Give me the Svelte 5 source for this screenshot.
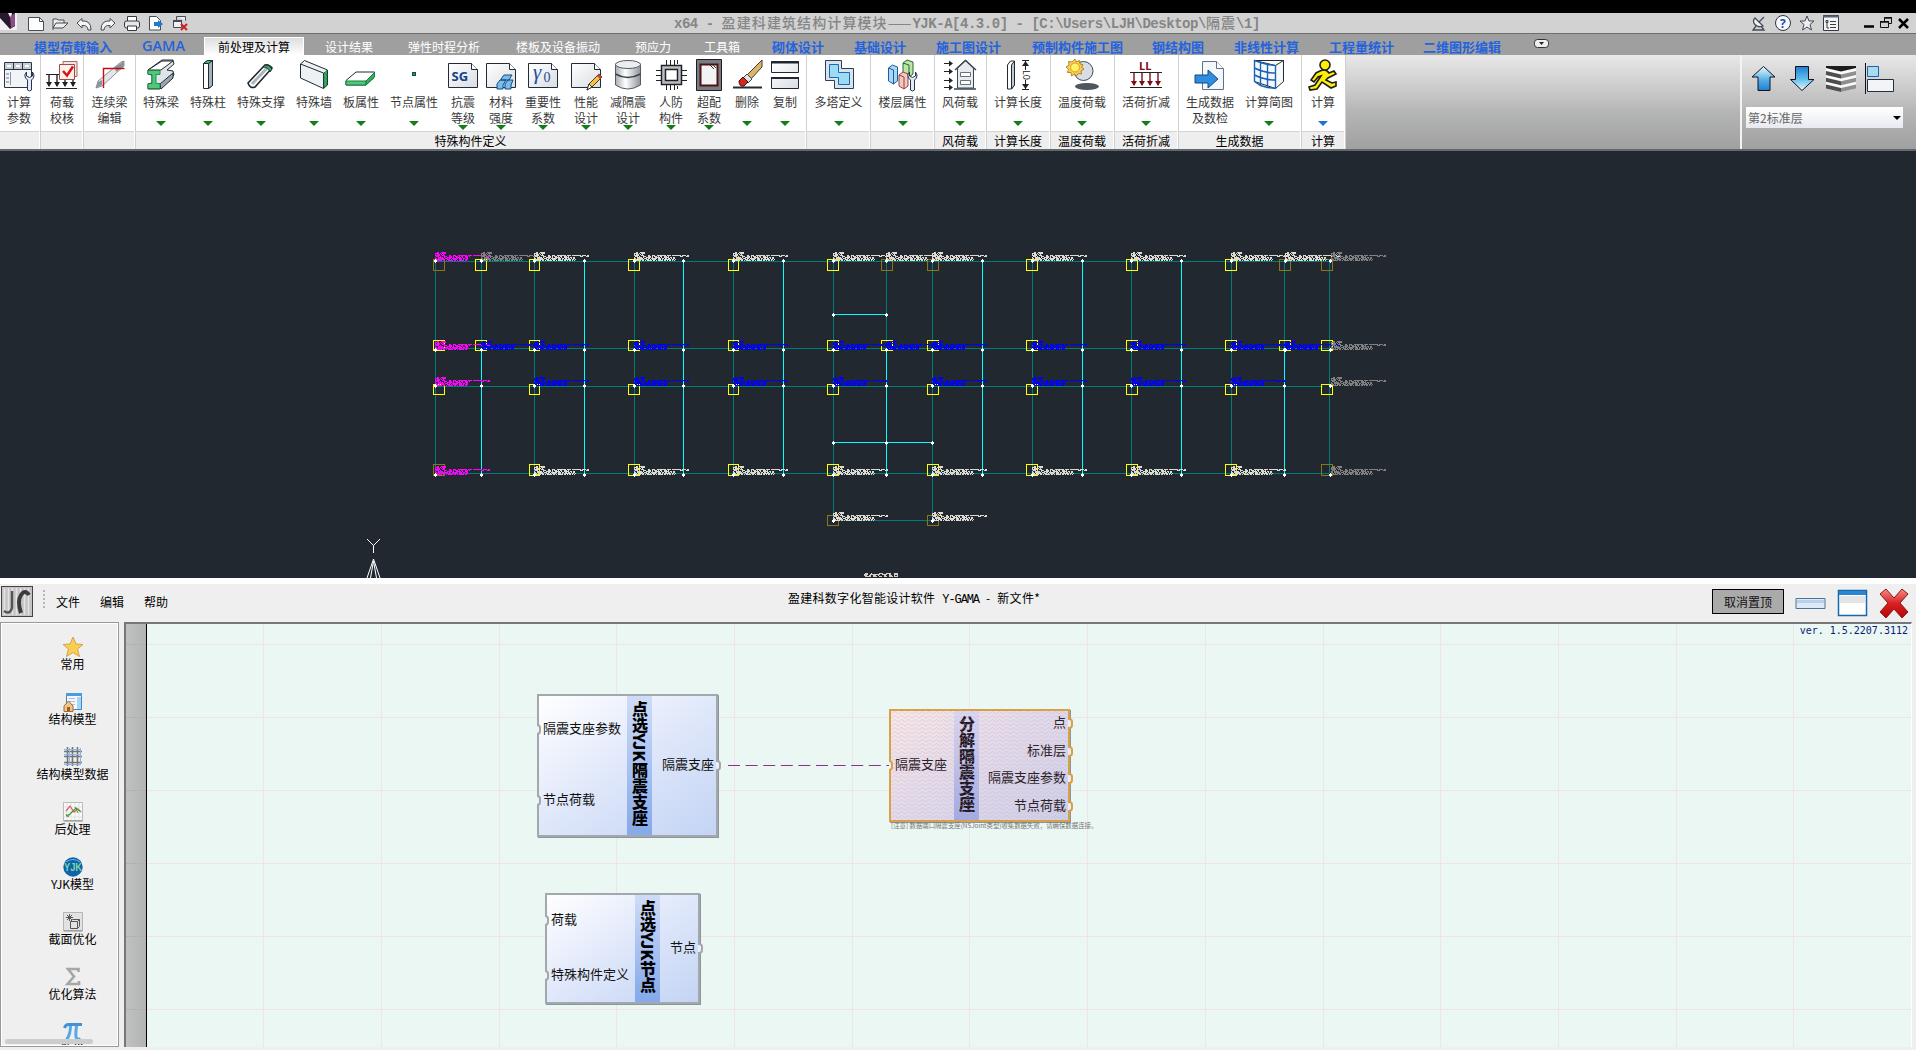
<script>
  const doc = '<path d="M1.5 4.500h23l6 6v18h-29z" fill="url(#gw)" stroke="#222b38"/><path d="M24.500 4.500v6h6" fill="#fff" stroke="#222b38"/>';
  const wrench = (x, y) => `<path transform="translate(${x} ${y})" d="M1.500 1v4l3 1.500 3-1.500v-4q2.500 3 1 6l-2 2v10q-2 2-4 0v-10l-2-2q-2-3 1-6z" fill="#e4ebf4" stroke="#26384d"/>`;
  const downs = (xs, y1, y2, c) => xs.map((x) => `<path d="M${x} ${y1}V${y2}" stroke="${c}" stroke-width="1.400"/><path d="M${x - 3} ${y2 - 4}h6l-3 5z" fill="${c}"/>`).join('');

  const icons = {
    params: `<path d="M1.500 3.500h27v25h-27z" fill="#f2f4f7" stroke="#2c3643"/><path d="M2 4h26v6H2z" fill="#c5ccd4"/><path d="M2 10.500h26M10.500 4v6M19.500 4v6" stroke="#2c3643"/><path d="M4 7h4M13 7h4M22 7h4" stroke="#fff" stroke-width="2"/><path d="M7.500 13v13" stroke="#8b95a1"/><path d="M3 15h3M3 19h3M3 23h3" stroke="#6b7683"/>${wrench(22, 12)}`,
    check: `<path d="M0 15.500h31M0 29.500h31" stroke="#222"/>${downs([3, 11, 19, 27], 16, 27, '#222')}<path d="M17 2.500h14v15h-14z" fill="#f5e3e0" stroke="#a66"/><path d="M13.500 5.500h15v15h-15z" fill="#fbf0ee" stroke="#9d4a47"/><path d="M17 12l4 4.500 6-9" fill="none" stroke="#e01010" stroke-width="2.500"/>`,
    cont: `<path d="M2 29l2-7L27 3l3-1v5L8 27z" fill="#e4e7ea" stroke="#8b929c"/><path d="M21 8l9-6v5l-8 6zM2 29l2-6 4-2v5z" fill="#8b929c"/><path d="M9.500 29V9.500h21" fill="none" stroke="#c40f16" stroke-width="1.400"/>`,
    beam: `<path d="M3 11L17 1h11l1 4-7 6 6 1 1 4-14 14H3v-5l4-1v-8l-4-1z" fill="#dfe4e7" stroke="#1f2b33"/><path d="M3 11h13L28 2H17z" fill="#fff" stroke="#1f2b33"/><path d="M15 25l13-11v5L16 30z" fill="#9da6ae" stroke="#1f2b33"/><path d="M3 11.500h12v4h-4v9h4v5H3v-5h4v-9H3z" fill="#4fc878" stroke="#137a3c" stroke-width=".8"/>`,
    column: `<path d="M11.500 4.500l4-3h5v25l-4 3h-5z" fill="#fff" stroke="#1f2b33"/><path d="M16.500 4.500v25l4-3V1.500z" fill="#a9b1b8" stroke="#1f2b33"/><path d="M11.500 4.500l4-3h5l-4 3z" fill="#36c96a" stroke="#1f2b33"/>`,
    brace: `<path d="M3 24L20 6q4-1 7 3L10 28q-5 2-7-4z" fill="#fff" stroke="#1f2b33" stroke-width="1.600"/><path d="M7 25L23 8" stroke="#aeb5bb" stroke-width="3"/><path d="M20 6q4-1 7 4l-2 3q-2-5-7-5z" fill="#2fae5c" stroke="#1f2b33"/>`,
    wall: `<path d="M2.500 5l4-3.500L29.500 11v15l-4 3.500L2.500 19z" fill="#eef1f3" stroke="#1f2b33"/><path d="M2.500 5L25.500 14v15l4-3.500V11" fill="none" stroke="#1f2b33"/><path d="M26 14l3-3v15l-3 2.500z" fill="#2fae5c" stroke="#1b6b39" stroke-dasharray="2 2"/>`,
    slab: `<path d="M1 21.500L11 13h18.500v5L21 26H1z" fill="#fff" stroke="#1f2b33"/><path d="M1 22h20v4H1z" fill="#4fc878" stroke="#178042"/><path d="M21 22l8.500-8.500v4.500L21 26z" fill="#2fae5c" stroke="#178042"/>`,
    node: '<path d="M14 13h4v4h-4z" fill="#1b4a38"/><path d="M15 14h2v2h-2z" fill="#2b8f62"/>',
    sg: `${doc}<text x="4.500" y="22" font-family="Open Sans, Noto Sans, sans-serif" font-weight="700" font-size="13" fill="#12428c">SG</text>`,
    material: `${doc}<path d="M12 25l3-4h6l-3 5v4h-6zM20 25l3-4h5l-2 5v4h-6zM16 20l3-4h8l-3 5h-8z" fill="#79bdf0" stroke="#174a7a"/>`,
    gamma: `${doc}<text x="6" y="20" font-family="Liberation Serif, serif" font-style="italic" font-size="21" fill="#1c4f9c">γ</text><text x="16.500" y="23" font-family="Liberation Serif, serif" font-size="14" fill="#1c4f9c">0</text>`,
    perf: `${doc}<path d="M17 31l2-6L29 15l3 3-10 10z" fill="#f6c443" stroke="#4d3a12"/><path d="M17 31l2-6 3 3z" fill="#fff" stroke="#333"/><path d="M27 17l2-2 3 3-2 2z" fill="#c8433a"/>`,
    isolate: '<path d="M3.500 5v21q12 8 25 0V5z" fill="url(#gc)" stroke="#555c64"/><ellipse cx="16" cy="5.500" rx="12.500" ry="4" fill="#eceef0" stroke="#555c64"/><path d="M3.500 15q12 7 25 0" fill="none" stroke="#3c434b" stroke-width="1.500"/>',
    civil: '<path d="M6.500 6.500h20v19h-20z" fill="#b9bfc7" stroke="#222" stroke-width="1.500"/><path d="M10.500 10.500h12v11h-12z" fill="#fff" stroke="#222" stroke-width="1.500"/><path d="M11.500 1v5M15.500 1v5M19.500 1v5M22.500 1v4M11.500 26v5M15.500 26v5M19.500 26v5M22.500 27v3M1 11.500h5M1 16.500h5M1 21.500h5M27 11.500h5M27 16.500h5M27 21.500h5" stroke="#222"/>',
    over: '<path d="M3.500.500h25v31h-25z" fill="#777c82" stroke="#1a1f26"/><path d="M7.500 5.500h17v21h-17z" fill="#f2f3f5" stroke="#5b0f0f" stroke-width="2"/><path d="M7.500 5.500h17v21h-17z" fill="none" stroke="#222" stroke-dasharray="2 3"/><path d="M17 6l4 4M20 6l3 3" stroke="#333"/>',
    erase: '<path d="M2 28.500h29" stroke="#222a33" stroke-width="2"/><path d="M15 17L31 1v7L19 21z" fill="#d9b56d" stroke="#4d3a20"/><path d="M12 19l4-4 5 5-4 4z" fill="#dfe3e6" stroke="#444"/><path d="M8 22l4-4 5 5-4 4q-5 1-5-5z" fill="#d8281c" stroke="#3d0d0d"/>',
    copy: '<path d="M2.500 2.500h27v11h-27zM2.500 18.500h27v11h-27z" fill="url(#gw)" stroke="#1f2733"/><path d="M2 3.500h28M2 19h28" stroke="#1f2733" stroke-width="2"/>',
    tower: '<path d="M2.500 1.500h16v8h12v20h-19v-8h-9z" fill="#dbe3ea" stroke="#28425a"/><path d="M6.500 5.500h9v8h11v12h-11v-7h-9z" fill="#9bdcf4" stroke="#1b69b0"/>',
    floors: `<path d="M16 4l4-3 6 2v12l-4 3-6-2z" fill="#bfe3a8" stroke="#27682b"/><path d="M16 4l6 2v12" fill="none" stroke="#27682b"/><path d="M1.500 9l4-3 5 2v14l-4 3-5-3z" fill="#a9d6f5" stroke="#1b5f9f"/><path d="M1.500 9l5 2v14" fill="none" stroke="#1b5f9f"/><path d="M12 16l4-3 5 2v12l-4 3-5-3z" fill="#f3c9c4" stroke="#9c4039"/><path d="M12 16l5 2v12" fill="none" stroke="#9c4039"/>${wrench(21, 12)}`,
    wind: '<path d="M0 4.500h7M0 12.500h7M0 21.500h7M0 28.500h7" stroke="#222"/><path d="M5 1.500l4 3-4 3zM5 9.500l4 3-4 3zM5 18.500l4 3-4 3zM5 25.500l4 3-4 3z" fill="#222"/><path d="M13.500 9l8-8 8 8v20h-16z" fill="#e8ecf0" stroke="#3b4651"/><path d="M11 11l10.500-9.500L32 11M10 30h22" fill="none" stroke="#3b4651" stroke-width="1.500"/><path d="M16.500 13.500h10v4h-10zM16.500 21.500h10v4h-10z" fill="#fff" stroke="#66717c"/>',
    length: '<path d="M5.500 6l3-4h4v24l-3 4h-4z" fill="#fff" stroke="#1f2b33"/><path d="M9.500 6v24l3-4V2z" fill="#c2c8cf" stroke="#1f2b33"/><path d="M20 1.500h7M20 30.500h7M23.500 2v9M23.500 21v9" stroke="#222"/><path d="M20 7l3.500-5 3.500 5zM20 25l3.500 5 3.500-5z" fill="#222"/><text transform="translate(21 11) rotate(90)" font-family="Open Sans, sans-serif" font-size="9" fill="#111">L0</text>',
    temp: '<ellipse cx="21" cy="27.500" rx="12" ry="3.500" fill="#50565e"/><circle cx="17.500" cy="12" r="9.500" fill="#d9dee4" stroke="#3c4a58"/><path d="M9 0l1.500 3 3-1.500.500 3.500 3 .500-1.500 3L18 10l-3 2 .500 3-3.500-.500L10.500 17l-2-2-3 2-.500-3.500-3.500 0 1-3L0 8l3-2L2.500 2.500 6 3z" fill="#f7cf52" stroke="#a8700e" stroke-width=".8"/><circle cx="9" cy="8.500" r="4.500" fill="#fff36b" stroke="#e39a14"/>',
    live: `<text x="9" y="11" font-family="Open Sans, Noto Sans, sans-serif" font-weight="700" font-size="11" fill="#7b0e16">LL</text><path d="M0 13.500h32M0 28.500h32" stroke="#222"/>${downs([4, 12, 20, 28], 14, 26, '#7b0e16')}`,
    gen: '<path d="M8.500 2.500h14l7 7v21h-21z" fill="#f4f7fa" stroke="#5c7390"/><path d="M22.500 2.500v7h7" fill="#fff" stroke="#5c7390"/><path d="M1 16h13v-5l10 9-10 9v-5H1z" fill="#2f8de0" stroke="#12497f"/>',
    diagram: '<path d="M1.500 1.500l21 5 8-5v21l-8 7-21-7z" fill="#f6f9fb" stroke="#1f2b33"/><path d="M1.500 1.500h29M22.500 6.500v23" stroke="#1f2b33"/><path d="M1.500 1.500v21l6 4 7 2 8 1v-23l-8-1-7-2zM7.500 3v23M14.500 5v23M1.500 9q10 5 21 5M1.500 16q10 5 21 5" fill="none" stroke="#1b62b5" stroke-width="1.400"/>',
    run: '<path d="M13 12q6-3 9 2l5-2 2 3-8 4-2 2 6 3 4-1v4l-5 2-9-6-5 7-7 1-1-3 6-2 6-9-3 1-4 5-3-2 5-7z" fill="#ffee0a" stroke="#1d1d10" stroke-width="1.600"/><circle cx="18" cy="6" r="5" fill="#ffee0a" stroke="#1d1d10" stroke-width="1.600"/>',
  };

  const quick = [
    '<path d="M.500 2.500h11l4 4v9H.500z" fill="#fff" stroke="#444b55"/><path d="M11.500 2.500v4h4" fill="none" stroke="#444b55"/>',
    '<path d="M1 15V4h4l1 1h6v3M1 13l3-5h12l-5 5H1z" fill="#eceef0" stroke="#444b55"/>',
    '<path d="M1 8l5-4.500V6q9-1 9 9h-3q0-5-6-4.500V13z" fill="#f4f5f6" stroke="#444b55"/>',
    '<path d="M15 8l-5-4.500V6q-9-1-9 9h3q0-5 6-4.500V13z" fill="#f4f5f6" stroke="#444b55"/>',
    '<path d="M3.500 6V1.500h9V6" fill="#fff" stroke="#333a44"/><rect x=".5" y="6" width="15" height="7" rx="2" fill="#e6e8ea" stroke="#333a44"/><path d="M3.500 11h9v4.500h-9z" fill="#fff" stroke="#333a44"/>',
    '<path d="M1.500 1.500h7l4 4v9.500h-11z" fill="#fff" stroke="#444b55"/><path d="M6 7h4V5l5 4-5 4v-2H6z" fill="#1f78c8"/>',
    '<path d="M4.500 1.500h9v4M1.500 5.500h8v7h-8zM4.500 5V1.500" fill="#f0f0f0" stroke="#444b55"/><path d="M1 6h9" stroke="#444b55" stroke-width="2"/><path d="M9 9l6 6M15 9l-6 6" stroke="#d01f1f" stroke-width="2"/>',
  ];
  const helpers = [
    '<path d="M4 3l8 8q-5 2-8-1.500T4 3z" fill="#f4f4f4" stroke="#444b55" stroke-width="1.300"/><path d="M8 7l5-5M5 11l-3 4h11l-3-4" fill="none" stroke="#444b55" stroke-width="1.300"/>',
    '<circle cx="8" cy="8" r="7.500" fill="#f7f9fc" stroke="#2c3643"/><text x="5" y="12.500" font-family="Open Sans, sans-serif" font-weight="700" font-size="12" fill="#1a4db0">?</text>',
    '<path d="M8 1l2 5h5l-4 3.500 1.500 5.500L8 12l-4.500 3L5 9.500 1 6h5z" fill="#eee" stroke="#444b55"/>',
    '<path d="M.500.500h15v15H.500z" fill="#f4f4f4" stroke="#333a44"/><path d="M0 1.500h16" stroke="#556070" stroke-width="2"/><path d="M3 5.500h2v2H3zM7 6.500h6M7 9.500h6M7 12.500h6M4 8v5h2" fill="none" stroke="#333a44"/>',
  ];

  // ml: distance from the previous tab, w: text box
  const tabs = [
    { t: '模型荷载输入', ml: 34, w: 78, b: 1 }, { t: 'GAMA', ml: 30, w: 43, b: 2 },
    { t: '前处理及计算', ml: 19, w: 100, active: 1 }, { t: '设计结果', ml: 21, w: 48 },
    { t: '弹性时程分析', ml: 35, w: 72 }, { t: '楼板及设备振动', ml: 36, w: 84 },
    { t: '预应力', ml: 35, w: 36 }, { t: '工具箱', ml: 33, w: 36 },
    { t: '砌体设计', ml: 32, w: 52, b: 1 }, { t: '基础设计', ml: 30, w: 52, b: 1 },
    { t: '施工图设计', ml: 30, w: 65, b: 1 }, { t: '预制构件施工图', ml: 31, w: 91, b: 1 },
    { t: '钢结构图', ml: 29, w: 52, b: 1 }, { t: '非线性计算', ml: 30, w: 65, b: 1 },
    { t: '工程量统计', ml: 30, w: 65, b: 1 }, { t: '二维图形编辑', ml: 29, w: 78, b: 1 },
  ];

  const c = (icon, w, l1, l2 = '', arrow = 'g') => ({ icon, w, l1, l2, arrow });
  const sections = [
    { w: 41, title: '', items: [c('params', 38, '计算', '参数', '')] },
    { w: 43, title: '', items: [c('check', 42, '荷载', '校核', '')] },
    { w: 52, title: '', items: [c('cont', 51, '连续梁', '编辑', '')] },
    { w: 671, title: '特殊构件定义', items: [
      c('beam', 50, '特殊梁'), c('column', 44, '特殊柱'), c('brace', 62, '特殊支撑'), c('wall', 44, '特殊墙'),
      c('slab', 50, '板属性'), c('node', 56, '节点属性'), c('sg', 42, '抗震', '等级'), c('material', 34, '材料', '强度'),
      c('gamma', 50, '重要性', '系数'), c('perf', 36, '性能', '设计'), c('isolate', 48, '减隔震', '设计'),
      c('civil', 38, '人防', '构件'), c('over', 38, '超配', '系数'), c('erase', 38, '删除'), c('copy', 38, '复制')] },
    { w: 64, title: '', items: [c('tower', 63, '多塔定义')] },
    { w: 64, title: '', items: [c('floors', 63, '楼层属性')] },
    { w: 52, title: '风荷载', items: [c('wind', 50, '风荷载')] },
    { w: 64, title: '计算长度', items: [c('length', 62, '计算长度')] },
    { w: 64, title: '温度荷载', items: [c('temp', 62, '温度荷载')] },
    { w: 64, title: '活荷折减', items: [c('live', 62, '活荷折减')] },
    { w: 123, title: '生成数据', items: [c('gen', 62, '生成数据', '及数检', ''), c('diagram', 56, '计算简图')] },
    { w: 44, title: '计算', items: [c('run', 42, '计算', '', 'b')] },
  ];

  const side = [
    { t: '常用', i: '<path d="M10 0l3 7 7 .500-5.500 4.500 2 7.500L10 15.500 3.500 19.500l2-7.500L0 7.500 7 7z" fill="#f9cf52" stroke="#d8a24a"/>' },
    { t: '结构模型', i: '<path d="M3.500 1.500h15v16h-15z" fill="#f4f8fc" stroke="#3b88c4"/><path d="M3 2.500h16" stroke="#4c9be0" stroke-width="3"/><path d="M14 5h4v12h-4z" fill="#a9d4f2"/><path d="M6 6.500h6M6 9.500h6M6 12.500h6" stroke="#b8b8d8"/><path d="M1 14l4.500-5L10 14v5.500H1z" fill="#efc48e" stroke="#a46a30"/><path d="M4 15h3v4H4z" fill="#a35a1c"/>' },
    { t: '结构模型数据', i: '<path d="M1 4.500h18M1 9.500h18M1 15.500h18M4.500 0v19M9.500 0v19M14.500 0v19" stroke="#70757b" stroke-width="1.600"/><path d="M1 2.500h17M1 7.500h17M1 17.500h17M6.500 1v17M17.500 1v17" stroke="#8db4dd"/>' },
    { t: '后处理', i: '<path d="M.500.500h19v18H.500z" fill="#fafafa" stroke="#bbb"/><path d="M.500 19h19" stroke="#888"/><path d="M4 1v17M8 1v17M12 1v17M16 1v17M1 5h18M1 10h18M1 15h18" stroke="#e2e2e2"/><path d="M3 9l4-5 4 6 4-3 3 3" fill="none" stroke="#d66" stroke-width="1.300"/><path d="M3 14l4-2 6-6 4 3" fill="none" stroke="#4a9a3c" stroke-width="1.300"/><path d="M3 12l2 3 2-3M12 5l3 6" fill="none" stroke="#4a9a3c"/>' },
    { t: 'YJK模型', i: '<circle cx="10" cy="10" r="9.700" fill="#0d64ab"/><path d="M3 5q7-5 14 0" fill="none" stroke="#6bb4ea"/><text x="1" y="14" font-family="Liberation Sans, sans-serif" font-weight="700" font-size="10" textLength="18" lengthAdjust="spacingAndGlyphs" fill="#7fd6a3">YJK</text>' },
    { t: '截面优化', i: '<path d="M.500.500h19v18H.500z" fill="#e2e2e2" stroke="#b5b5b5"/><path d="M.500 19h19" stroke="#8a8a8a"/><path d="M7.500 9.500h7v7h-7zM7.500 9.500l2-2h7v7l-2 2M14.500 9.500l2-2" fill="none" stroke="#555"/><path d="M6.500 2v7M3 5.500h7M4 3l5 5M9 3L4 8" stroke="#555"/>' },
    { t: '优化算法', i: '<path d="M15.500 5V2H5l6 7.500L4.500 17h11.500v-3" fill="none" stroke="#a5a6a9" stroke-width="2.600"/>' },
    { t: '数学', i: '<path d="M1.500 6q1-3.500 4-3.500h13.500" fill="none" stroke="#4391d0" stroke-width="3"/><path d="M7.500 4q0 8-4 14M13.500 4q-1 8-.500 11 1 3.500 4.500 1.500" fill="none" stroke="#57a8e6" stroke-width="3"/>' },
  ];

  // structural plan: column axes, row axes
  const xsMain = [534, 634, 733, 833, 932, 1032, 1131, 1231];
  const rowY = [261, 348, 386, 473, 520];
  const labY = [252, 341, 377, 466, 512];
  const sqY = [[259.5, 11], [340.5, 10], [384.5, 10], [464.5, 11], [515.5, 10]];
  const M = '#ff00ff', G = '#808080', W = '#dedad2', B = '#0000ff';
  const labels = [
    ...[[435, M], [481, G], ...[...xsMain, 886, 1285].map((x) => [x, W]), [1331, G]].map(([x, k]) => ({ x, y: labY[0], k, r: 0 })),
    ...[[435, M], ...[481, ...xsMain, 886, 1285].map((x) => [x, B]), [1331, G]].map(([x, k]) => ({ x, y: labY[1], k, r: 1 })),
    ...[[435, M], ...xsMain.map((x) => [x, B]), [1331, G]].map(([x, k]) => ({ x, y: labY[2], k, r: 2 })),
    ...[[435, M], ...xsMain.map((x) => [x, W]), [1331, G]].map(([x, k]) => ({ x, y: labY[3], k, r: 3 })),
    ...[833, 932].map((x) => ({ x, y: labY[4], k: W, r: 4 })),
  ];
  const olive = { 0: [435, 886, 932, 1285, 1331], 3: [435, 1331], 4: [833, 932] };
  const sqX = { 435: 433.5, 481: 475.5, 534: 529.5, 634: 628.5, 733: 728.5, 833: 827.5, 886: 881.5, 932: 927.5, 1032: 1026.5, 1131: 1126.5, 1231: 1225.5, 1285: 1279.5, 1331: 1321.5 };
  const squares = labels.map((l) => ({
    x: sqX[l.x], y: sqY[l.r][0], w: [534, 733].includes(l.x) ? 10 : 11, h: sqY[l.r][1],
    k: (olive[l.r] || []).includes(l.x) ? '#8b7716' : '#ffff00',
  }));
  const teal = [[435, 473], [481, 348], [534, 473], [634, 473], [733, 473], [833, 520], [886, 348], [932, 520], [1032, 473], [1131, 473], [1231, 473], [1284, 348], [1329, 473]];
  const cyan = [[481, 348], [584, 261], [683, 261], [783, 261], [886, 348], [982, 261], [1082, 261], [1181, 261], [1284, 348]];
  const dots = [
    ...labels.map((l) => [l.x === 1331 ? 1330 : l.x, [260, 349, 385, 474, 520][l.r]]),
    ...cyan.flatMap(([x, y]) => (y === 261 ? [260, 349, 385, 474] : [349, 385, 474]).map((yy) => [x, yy])),
    [833, 314], [886, 314], [833, 442], [886, 442], [932, 442],
  ];

  const gridX = Array.from({ length: 15 }, (_, i) => Math.round(146.2 + (i + 1) * 117.68 - 0.5) + 0.5);
  const gridY = [644.5, 717.5, 790.5, 863.5, 936.5, 1009.5];

  const nodes = [
    { id: 'a', title: '点选YJK隔震支座', ins: [[34, '隔震支座参数'], [105, '节点荷载']], outs: [[70, '隔震支座']] },
    { id: 'b', title: '分解隔震支座', warn: 1, ins: [[55, '隔震支座']], outs: [[13, '点'], [41, '标准层'], [68, '隔震支座参数'], [96, '节点荷载']] },
    { id: 'c', title: '点选YJK节点', ins: [[26, '荷载'], [81, '特殊构件定义']], outs: [[54, '节点']] },
  ];
</script>

<svg class="defs" width="0" height="0" aria-hidden="true">
  <defs>
    <linearGradient id="gw" x1="0" y1="0" x2="1" y2="1"><stop offset="0" stop-color="#fff" /><stop offset="1" stop-color="#d9dde2" /></linearGradient>
    <linearGradient id="gc" x1="0" x2="1"><stop offset="0" stop-color="#a9adb2" /><stop offset=".4" stop-color="#fff" /><stop offset="1" stop-color="#8f949a" /></linearGradient>
    <linearGradient id="gu" x1="0" y1="0" x2="0" y2="1"><stop offset="0" stop-color="#e8fbff" /><stop offset=".6" stop-color="#4fa9e2" /><stop offset="1" stop-color="#1f7fd2" /></linearGradient>
    <linearGradient id="gd" x1="0" y1="0" x2="0" y2="1"><stop offset="0" stop-color="#1f7fd2" /><stop offset=".5" stop-color="#5dbbe8" /><stop offset="1" stop-color="#e8fbff" /></linearGradient>
    <linearGradient id="gr" x1="0" y1="0" x2="0" y2="1"><stop offset="0" stop-color="#f58d8d" /><stop offset=".5" stop-color="#d92020" /><stop offset="1" stop-color="#b30808" /></linearGradient>
    <linearGradient id="gs" x1="0" x2="1"><stop offset="0" stop-color="#bfc2c1" /><stop offset="1" stop-color="#b2b4b3" /></linearGradient>
    <pattern id="zig" width="7" height="4" patternUnits="userSpaceOnUse"><path d="M0 3l3.500-2.500L7 3" fill="none" stroke="#d3a6f0" stroke-opacity=".5" stroke-width=".8" /></pattern>
  </defs>
</svg>

<div class="app">
  <div class="letterbox"></div>
  <header class="titlebar">
    <svg class="logo" width="18" height="18" viewBox="0 0 18 18"><path d="M0 0h17v17H0z" fill="#f4eef4" /><path d="M0 0h8l3 6 1-6h3v13l-5 3L0 5z" fill="#2a1830" /><path d="M10 4l5-4v12l-4 3z" fill="#8a4f86" /></svg>
    <div class="quick">
      {#each quick as q}<svg width="16" height="17" viewBox="0 0 16 17">{@html q}</svg>{/each}
    </div>
    <div class="wtitle">x64 - <b>盈建科建筑结构计算模块——</b>YJK-A[4.3.0] - [C:\Users\LJH\Desktop\<b>隔震</b>\1]</div>
    <div class="helpers">
      {#each helpers as h}<svg width="16" height="17" viewBox="0 0 16 17">{@html h}</svg>{/each}
    </div>
    <svg class="winbtns" width="46" height="18" viewBox="0 0 46 18">
      <path d="M0 10.500h10" stroke="#000" stroke-width="2.500" />
      <path d="M20.500 5.500v-4h7v6h-3M16.500 5.500h8v6h-8z" fill="none" stroke="#111" /><path d="M20 2h8M16 6h9" stroke="#111" stroke-width="1.500" />
      <path d="M35 3l9 9M44 3l-9 9" stroke="#000" stroke-width="2.500" />
    </svg>
  </header>

  <nav class="tabs">
    {#each tabs as t}
      <span class="tab" class:bold={t.b} class:latin={t.b === 2} class:active={t.active} style="margin-left:{t.ml}px;width:{t.w}px">{t.t}</span>
    {/each}
    <svg class="pill" width="16" height="10" viewBox="0 0 16 10"><rect x=".5" y=".5" width="14" height="8" rx="3" fill="#eee" stroke="#333" /><path d="M5 3h5L7.500 6z" fill="#222" /></svg>
  </nav>

  <div class="ribbon">
    {#each sections as s}
      <section class="section" style="width:{s.w}px">
        <div class="items">
          {#each s.items as it}
            <div class="item" style="width:{it.w}px">
              <svg width="32" height="32" viewBox="0 0 32 32">{@html icons[it.icon]}</svg>
              <span>{it.l1}</span>
              <span>{it.l2}</span>
              {#if it.arrow}<i class="arrow" class:two={it.l2} class:blue={it.arrow === 'b'}></i>{/if}
            </div>
          {/each}
        </div>
        <div class="caption">{s.title}</div>
      </section>
    {/each}
    <div class="filler"></div>
    <div class="floor">
      <svg width="150" height="32" viewBox="0 0 150 32">
        <path d="M12.500 3.500L24 14h-5v13.500H7V14H1z" fill="url(#gu)" stroke="#112" />
        <path d="M44.500 3.500h13v13h5.500L51 27.500 39.500 16.500h5z" fill="url(#gd)" stroke="#112" />
        <path d="M75 3h30v22.500L90 29l-15-3.500z" fill="#fafafa" />
        <path d="M75 3h30v2l-15 3.500L75 5z" fill="#1c1c1c" />
        <path d="M75 8l15 3.500v4L75 12zM75 14.800l15 3.500v4l-15-3.500zM75 21.500L90 25v4l-15-3.500z" fill="#4e4e4e" />
        <path d="M105 8l-15 3.500v4l15-3.500zM105 14.800l-15 3.500v4l15-3.500zM105 21.500L90 25v4l15-3.500z" fill="#8f8f8f" />
        <path d="M114.500 0v31" stroke="#111" /><path d="M116.500 3.500h11v10h-11z" fill="#a8dced" stroke="#1b62b5" /><path d="M116.500 16.500h26v12h-26z" fill="#f2f4f7" stroke="#26303c" />
      </svg>
      <div class="select"><span>第2标准层</span><i></i></div>
    </div>
  </div>

  <svg class="plan" width="1916" height="427" viewBox="0 151 1916 427" shape-rendering="crispEdges">
    <defs>
      <g id="lab" fill="none" stroke="currentColor">
        <path d="M2 .5h2M5.500 .5h5" /><path d="M0 1.500h11" stroke-dasharray="4 1 1 1" /><path d="M0 2.500h9" stroke-dasharray="1 1 3 1" />
        <path d="M0 3.500h5M7 3.500h3M14 3.500h2M18 3.500h3M23 3.500h32" stroke-dasharray="9 1 4 1" /><path d="M1 4.500h6M9 4.500h4M14 4.500h14M30 4.500h5M46 4.500h3M52 4.500h3" stroke-dasharray="3 1 1 1" />
        <path d="M0 5.500h33" stroke-dasharray="1 2 5 1" /><path d="M0 6.500h33" stroke-dasharray="2 1 6 1 3 1" /><path d="M0 7.500h33" stroke-dasharray="3 1 1 1 4 2" /><path d="M2 8.500h31" stroke-dasharray="5 1 2 1 1 1" />
      </g>
      <g id="ext" fill="none" stroke="currentColor"><path d="M31 5.500h10M33 7.500h9" stroke-dasharray="4 1 2 1" /><path d="M32 6.500h10M33 8.500h8" stroke-dasharray="1 1 2 1" /></g>
    </defs>
    {#each rowY as y, i}<path d="M{i === 4 ? 833 : 435} {y + 0.5}H{i === 4 ? 932 : i === 2 ? 1323 : 1329}" stroke="#007c7c" />{/each}
    {#each teal as [x, y]}<path d="M{x + 0.5} 261V{y}" stroke="#007c7c" />{/each}
    {#each cyan as [x, y]}<path d="M{x + 0.5} {y}V474" stroke="#00ffff" />{/each}
    <path d="M833 314.500h53M833 442.500h99" stroke="#00ffff" />
    {#each squares as s}<rect x={s.x} y={s.y} width={s.w} height={s.h} fill="none" stroke={s.k} />{/each}
    {#each labels as l}
      <g color={l.k}><use href="#lab" x={l.x} y={l.y} />{#if l.k === W || l.k === G}<use href="#ext" x={l.x} y={l.y} />{/if}</g>
    {/each}
    {#each dots as [x, y]}<path d="M{x - 1} {y}h3v2h-3zM{x} {y - 1}h1v4h-1z" fill="#fff" />{/each}
    <path d="M865 573.500h3M871 573.500h1M879 573.500h4M886 573.500h5M894 573.500h4M864 574.500h4M870 574.500h10M882 574.500h5M889 574.500h2M894 574.500h4M864 575.500h3M869 575.500h2M873 575.500h3M878 575.500h1M884 575.500h2M889 575.500h3M894 575.500h1M897 575.500h1M865 576.500h6M873 576.500h4M879 576.500h3M884 576.500h3M889 576.500h4M894 576.500h4" stroke="#d4ccc8" />
    <g fill="none" stroke="#fff" shape-rendering="auto"><path d="M367 539l6.500 6.500L380 539M373.500 545.500v7.500" /><path d="M367 578l6.500-19 6.500 19M370.500 578l3-17 3 17" /></g>
  </svg>

  <div class="gama">
    <div class="menubar">
      <svg class="jc" width="32" height="31" viewBox="0 0 32 31"><rect x=".5" y=".5" width="31" height="30" fill="#c4c4c4" stroke="#444" /><path d="M3.500 2v27M7.500 2v27M11.500 2v27M15.500 2v27M19.500 2v27M23.500 2v27M27.500 2v27" stroke="#e4e4e4" stroke-width="1.500" /><path d="M11 5v17q-2 7-8 3" fill="none" stroke="#555" stroke-width="2.500" /><path d="M28 9q-4-6-8 0t0 18" fill="none" stroke="#3c3c3c" stroke-width="4" /></svg>
      <div class="grip"></div>
      <span class="menu">文件</span><span class="menu">编辑</span><span class="menu">帮助</span>
      <div class="gtitle">盈建科数字化智能设计软件 <tt>Y-GAMA</tt> - 新文件*</div>
      <button class="pin">取消置顶</button>
      <svg width="116" height="32" viewBox="0 0 116 32">
        <path d="M1 11.500h29v10H1z" fill="#dce9f6" stroke="#4f7396" /><path d="M2 13h27v3H2z" fill="#b8d0e8" />
        <path d="M43.500 3.500h28v25h-28z" fill="#fff" stroke="#1668ac" stroke-width="1.500" /><path d="M44 4h27v4H44z" fill="#2a86d3" /><path d="M45 9h25v7H45z" fill="#e4e4e6" />
        <path d="M85 7l6-5 8 9 8-9 6 5-8 9 8 9-6 6-8-9-8 9-6-6 8-9z" fill="url(#gr)" stroke="#8b1a1a" />
      </svg>
    </div>
    <div class="body">
      <aside class="side">
        {#each side as s}
          <div class="sitem"><svg width="20" height="20" viewBox="0 0 20 20">{@html s.i}</svg><span>{s.t}</span></div>
        {/each}
        <div class="hscroll"></div>
      </aside>
      <main class="canvas">
        <svg class="grid" width="1785" height="423" viewBox="126 624 1785 423">
          <path d="M126 624h20v423h-20z" fill="url(#gs)" />
          {#each gridX as x}<path d="M{x} 624V1047" stroke="#ede5e6" />{/each}
          {#each gridY as y}<path d="M147 {y}H1911" stroke="#f0e3e4" /><path d="M126 {y}h20" stroke="#b4b2b0" />{/each}
          <path d="M146.500 624v423" stroke="#000" />
          <path d="M728 765.500H891" stroke="#8e2f8e" stroke-dasharray="12 5.6" />
        </svg>
        {#each nodes as n}
          <div class="node {n.id}" class:warn={n.warn}>
            <div class="band">{n.title}</div>
            {#if n.warn}<svg class="weave" width="177" height="109"><rect width="177" height="109" fill="url(#zig)" /></svg>{/if}
            {#each n.ins as [y, t]}<div class="port in" style="top:{y}px"><i></i>{t}</div>{/each}
            {#each n.outs as [y, t]}<div class="port out" style="top:{y}px">{t}<i></i></div>{/each}
          </div>
        {/each}
        <div class="note">[注意] 数据端口隔震支座(NSJoint类型)收集数据失败，请确保数据连接。</div>
        <div class="ver">ver. 1.5.2207.3112</div>
      </main>
    </div>
  </div>
</div>

<style>
  :global(body) { margin: 0; background: #efefef; }
  .defs { position: absolute; }
  .app { width: 1916px; height: 1050px; overflow: hidden; display: flex; flex-direction: column; font: 12px/16px "Noto Sans CJK SC", sans-serif; color: #222; }
  svg { display: block; flex: none; overflow: visible; }
  .letterbox { height: 13px; background: #000; flex: none; }
  .titlebar { height: 21px; flex: none; box-sizing: border-box; display: flex; background: #d2d2d2; border-bottom: 1px solid #6d6d6d; }
  .logo { overflow: hidden; }
  .quick { display: flex; gap: 8px; margin: 2px 0 0 10px; width: 300px; }
  .wtitle { margin-left: 346px; width: 640px; white-space: pre; font: bold 14px/19px "Liberation Mono", "Noto Sans CJK SC", monospace; letter-spacing: -.47px; color: #858585; }
  .wtitle b { letter-spacing: 1.1px; font: 500 14px/19px "Noto Sans CJK SC", sans-serif; }
  .helpers { display: flex; gap: 8px; margin: 2px 0 0 437px; }
  .winbtns { margin: 3px 0 0 25px; }
  .tabs { height: 21px; flex: none; display: flex; background: #9f9f9f; }
  .tab { flex: none; box-sizing: border-box; white-space: nowrap; text-align: center; color: #fff; line-height: 25px; height: 21px; }
  .tab.bold { font-weight: 700; font-size: 13px; color: #2463de; }
  .tab.latin { font: 600 14.5px/24px "Open Sans", sans-serif; }
  .tab.active { height: 18px; margin-top: 3px; line-height: 18px; color: #000; background: linear-gradient(#dedede, #fff); border: 1px solid #fff; border-bottom: 0; }
  .pill { margin: 5px 0 0 33px; }
  .ribbon { height: 96px; flex: none; box-sizing: border-box; display: flex; background: linear-gradient(#e8e8e8, #c3c3c3 45%, #b4b6b5 60%, #a0a0a0); border-bottom: 2px solid #63686d; }
  .section { flex: none; box-sizing: border-box; background: #fff; border-right: 1px solid #d0d0d0; display: flex; flex-direction: column; }
  .items { height: 76px; display: flex; }
  .item { flex: none; position: relative; display: flex; flex-direction: column; align-items: center; padding-top: 4px; white-space: nowrap; color: #3a3a3a; }
  .item span { height: 16px; line-height: 16px; }
  .item svg + span { margin-top: 3px; }
  .arrow { position: absolute; top: 66px; left: calc(50% - 5px); border: 5px solid transparent; border-top-color: #157d15; border-bottom: 0; }
  .arrow.two { top: 70px; }
  .arrow.blue { border-top-color: #1c72d8; }
  .caption { height: 17px; border-top: 1px solid #d4d4d4; background: #eee; margin: 0 1px 0 0; text-align: center; line-height: 18px; color: #000; white-space: nowrap; }
  .filler { flex: 1; }
  .floor { width: 165px; padding: 8px 0 0 9px; border-left: 2px solid #f4f4f4; }
  .select { margin: 12px 0 0 -5px; width: 157px; height: 21px; display: flex; align-items: center; justify-content: space-between; background: linear-gradient(#fff, #e8eaf0); color: #666; }
  .select span { margin-left: 2px; }
  .select i { border: 4px solid transparent; border-top-color: #000; border-bottom: 0; margin-right: 2px; }
  .plan { background: #222830; overflow: hidden; }
  .gama { height: 472px; flex: none; background: #efefef; }
  .menubar { height: 44px; box-sizing: border-box; border-top: 6px solid #fff; display: flex; align-items: flex-start; color: #000; }
  .jc { margin: 2px 0 0 1px; }
  .grip { width: 2px; height: 20px; margin: 6px 11px 0 10px; background: repeating-linear-gradient(#b5b5b5 0 2px, transparent 2px 4px); }
  .menu { width: 24px; margin-right: 20px; line-height: 35px; height: 36px; }
  .gtitle { margin-left: 600px; width: 300px; white-space: pre; line-height: 27px; letter-spacing: .28px; word-spacing: 4px; }
  .gtitle tt { font: 12px "Liberation Mono", monospace; letter-spacing: -1.1px; }
  .pin { box-sizing: border-box; margin: 5px 11px 0 624px; width: 72px; height: 25px; padding: 0; border: 1px solid #000; background: #aaa; font: 12px/20px "Noto Sans CJK SC", sans-serif; color: #111; flex: none; }
  .menubar > svg:last-child { margin-top: 3px; }
  .body { display: flex; gap: 5px; height: 426px; }
  .side { position: relative; width: 119px; height: 425px; box-sizing: border-box; border: 2px solid #fff; outline: 1px solid #999; outline-offset: -1px; padding: 13px 0 0 27px; display: flex; flex-direction: column; gap: 20px; overflow: hidden; flex: none; }
  .sitem { flex: none; display: flex; flex-direction: column; align-items: center; color: #000; line-height: 14px; height: 35px; }
  .sitem:nth-child(n) { width: 87px; }
  .hscroll { position: absolute; left: 3px; bottom: 1px; width: 88px; height: 5px; border-radius: 3px; background: #cdcdcd; }
  .canvas { position: relative; width: 1785px; height: 423px; flex: none; overflow: hidden; background: #ebf7f3; border: 2px solid #777; border-width: 2px 0 0 2px; border-right: 1px solid #fff; }
  .node { position: absolute; box-sizing: border-box; border: 2px solid #a3a8ad; box-shadow: 1px 1px 0 #8e959c; background: linear-gradient(145deg, #fff, #dfe7fa 50%, #c3d4f4); color: #111; }
  .node.a { left: 411px; top: 70px; width: 181px; height: 143px; }
  .node.b { left: 763px; top: 85px; width: 181px; height: 113px; }
  .node.c { left: 419px; top: 269px; width: 155px; height: 111px; }
  .node.warn { border-color: #d9a04a; background: linear-gradient(145deg, #f8e9e2, #e2dce6 45%, #cdd0e4); color: #2d222b; }
  .weave { position: absolute; left: 0; top: 0; overflow: hidden; }
  .band { position: absolute; top: 0; bottom: 4px; left: 88px; width: 25px; display: flex; align-items: center; justify-content: center; writing-mode: vertical-rl; font-size: 16px; line-height: 25px; font-weight: 900; background: linear-gradient(#cfdcf8, #86aaea); white-space: nowrap; color: #000; box-shadow: 0 4px 0 #86aaea; }
  .warn .band { left: 63px; background: linear-gradient(#dcd9ee, #a0ace0); box-shadow: 0 4px 0 #a0ace0; color: #201820; }
  .port { position: absolute; font-size: 13px; line-height: 18px; margin-top: -11px; white-space: nowrap; }
  .in { left: 4px; }
  .out { right: 2px; }
  .port i { position: absolute; top: 5px; width: 3px; height: 11px; box-sizing: border-box; border: 2px solid #a3a8ad; background: #e9eef8; border-left: 0; border-radius: 0 4px 4px 0; }
  .in i { left: -6px; width: 4px; background: #ebf7f3; }
  .out i { right: -7px; width: 5px; }
  .warn .port i { border-color: #d9a04a; }
  .note { position: absolute; left: 765px; top: 197px; font-size: 6.4px; line-height: 10px; white-space: nowrap; color: #777; }
  .ver { position: absolute; right: 3px; top: 0; font: 10px/14px "DejaVu Sans Mono", monospace; color: #0b1c78; }
  .grid { overflow: hidden; }
</style>
